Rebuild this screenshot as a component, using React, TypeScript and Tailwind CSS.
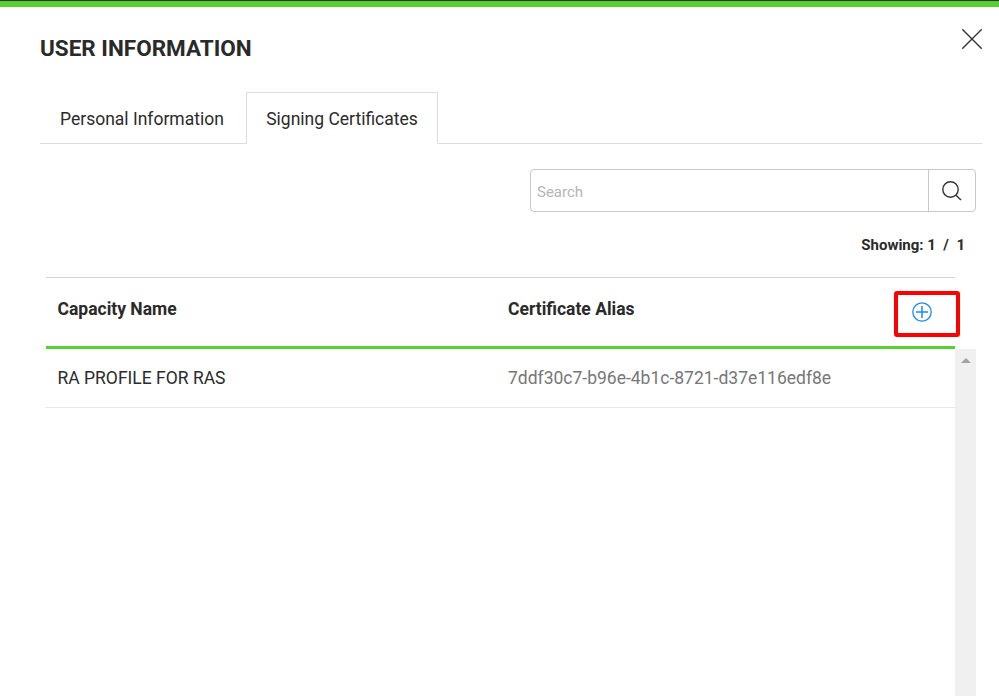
const font = { fontFamily: 'Roboto, sans-serif' }

function PlusCircle() {
  return (
    <svg width="20" height="20" viewBox="0 0 20 20" fill="none" stroke="#1e88f5" strokeWidth="1.3">
      <circle cx="10" cy="10" r="9.2" />
      <path d="M10 4v12M4 10h12" strokeWidth="1.5" />
    </svg>
  )
}

export default function App() {
  return (
    <div className="h-[696px] w-[999px] overflow-hidden bg-white text-[#212121]" style={font}>
      {/* top accent */}
      <div className="h-[7px] border-t border-[#333] bg-[#57d131]" />

      <div className="relative pl-10 pr-[17px]">
        <button className="absolute right-[17px] top-[22px] text-[#333]">
          <svg width="20" height="20" viewBox="0 0 20 20" fill="none" stroke="currentColor" strokeWidth="1.4" className="block">
            <path d="M0.3 0.3L19.7 19.7M19.7 0.3L0.3 19.7" />
          </svg>
        </button>

        <h1 className="pt-[27px] text-[22.5px] leading-[28px] font-bold text-[#2a2a2a]">USER INFORMATION</h1>

        {/* tabs */}
        <div className="mt-[30px] flex h-[52px] border-b border-[#dcdcdc]">
          <div className="flex h-[52px] w-[206px] items-center pt-[2px] pl-5 text-[17.5px] text-[#2b2b2b]">Personal Information</div>
          <div className="flex h-[52px] w-[192px] items-center justify-center border border-b-white border-[#dcdcdc] bg-white pt-[2px] text-[17.5px] text-[#2b2b2b]">
            Signing Certificates
          </div>
        </div>

        {/* search */}
        <div className="mt-[25px] mr-[6px] flex justify-end">
          <div className="flex h-[43px] w-[446px] rounded-[4px] border border-[#c8c8c8]">
            <div className="flex flex-1 items-center pt-[3px] pl-[6px] text-[15px] text-[#b5b5b5]">Search</div>
            <div className="flex w-[47px] items-center justify-center border-l border-[#c8c8c8] text-[#333]">
              <svg width="20" height="20" viewBox="0 0 20 20" fill="none" stroke="currentColor" strokeWidth="1.4" className="block">
                <circle cx="8.5" cy="8.5" r="7.7" />
                <path d="M14 14.2L19 19" />
              </svg>
            </div>
          </div>
        </div>

        <div className="mt-[24px] mr-[17px] text-right text-[15px] leading-[18px] font-bold text-[#2a2a2a]">
          Showing: 1&nbsp; /&nbsp; 1
        </div>

        {/* table */}
        <div className="mt-[23px] ml-[6px]">
          <div className="relative mr-[27px] flex h-[72px] border-t border-b-[3px] border-t-[#d4d4d4] border-b-[#57d131] text-[17.5px] font-bold text-[#2a2a2a]">
            <div className="w-[462px] pt-[18px] pl-[11.5px]">Capacity Name</div>
            <div className="flex-1 pt-[18px]">Certificate Alias</div>
            <div className="absolute top-[24px] left-[866px]">
              <PlusCircle />
            </div>
            <div className="absolute top-[13px] left-[848px] h-[46px] w-[66px] rounded-[3px] border-[4px] border-[#ff0000]" />
          </div>
          <div className="flex">
            <div className="w-[909px]">
              <div className="flex h-[59px] items-center border-b border-[#e8e8e8] text-[17.5px]">
                <div className="w-[462px] pl-[11.5px] text-[#2b2b2b]">RA PROFILE FOR RAS</div>
                <div className="text-[#777]">7ddf30c7-b96e-4b1c-8721-d37e116edf8e</div>
              </div>
            </div>
            <div className="flex h-[350px] w-[21px] justify-center bg-[#f0f0f0] pt-[9px]">
              <div className="h-0 w-0 border-x-[5px] border-b-[5px] border-x-transparent border-b-[#a3a3a3]" />
            </div>
          </div>
        </div>
      </div>
    </div>
  )
}
